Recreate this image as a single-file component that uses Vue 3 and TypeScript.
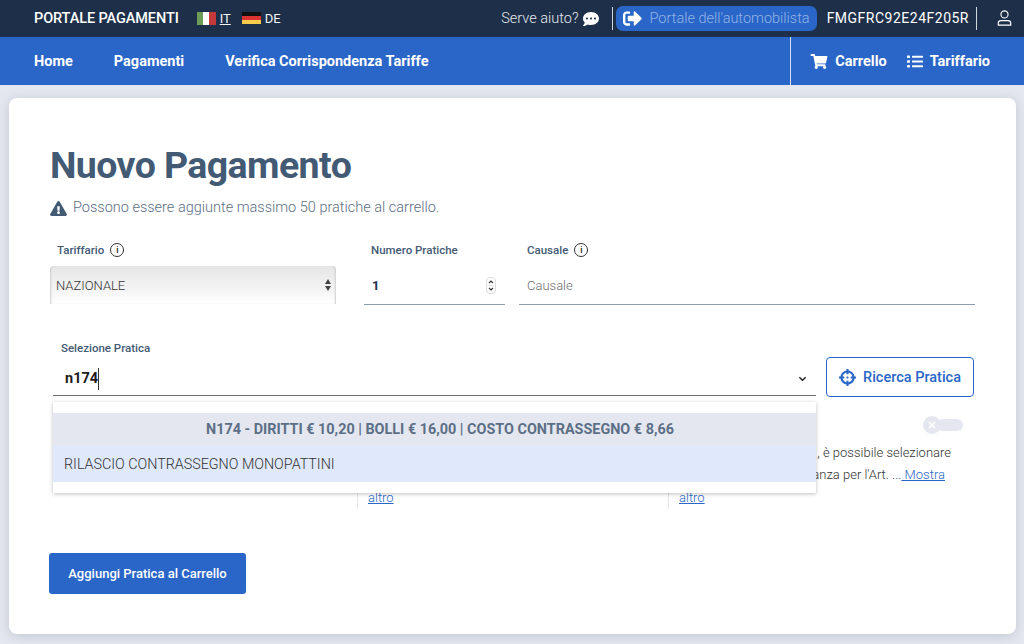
<template>
  <div class="page">
    <header class="topbar">
      <div class="topbar-left">
        <span class="brand">PORTALE PAGAMENTI</span>
        <span class="flag flag--it"><i /><i /><i /></span>
        <a class="lang lang--active">IT</a>
        <span class="flag flag--de"><i /><i /><i /></span>
        <a class="lang">DE</a>
      </div>
      <div class="topbar-right">
        <span class="help">Serve aiuto?</span>
        <svg class="icon-chat" viewBox="0 0 512 512" fill="currentColor">
          <path d="M256 32C114.600 32 0 125.100 0 240c0 49.600 21.400 95 57 130.700C44.500 421.100 2.700 466 2.200 466.500c-2.200 2.300-2.800 5.700-1.500 8.700S4.800 480 8 480c66.300 0 116-31.800 140.600-51.400 32.700 12.300 69 19.400 107.400 19.400 141.400 0 256-93.100 256-208S397.400 32 256 32zM128 272c-17.700 0-32-14.300-32-32s14.300-32 32-32 32 14.300 32 32-14.300 32-32 32zm128 0c-17.700 0-32-14.300-32-32s14.300-32 32-32 32 14.300 32 32-14.300 32-32 32zm128 0c-17.700 0-32-14.300-32-32s14.300-32 32-32 32 14.300 32 32-14.300 32-32 32z" />
        </svg>
        <span class="divider" />
        <a class="portal">
          <svg class="icon-portal" viewBox="0 0 512 512" fill="currentColor">
            <path d="M497 273L329 441c-15 15-41 4.500-41-17v-96H152c-13.300 0-24-10.700-24-24v-96c0-13.300 10.700-24 24-24h136V88c0-21.400 25.900-32 41-17l168 168c9.300 9.400 9.300 24.600 0 34zM192 436v-40c0-6.600-5.400-12-12-12H96c-17.700 0-32-14.300-32-32V160c0-17.700 14.300-32 32-32h84c6.600 0 12-5.400 12-12V76c0-6.600-5.400-12-12-12H96c-53 0-96 43-96 96v192c0 53 43 96 96 96h84c6.600 0 12-5.400 12-12z" />
          </svg>
          <span>Portale dell'automobilista</span>
        </a>
        <span class="fiscal">FMGFRC92E24F205R</span>
        <span class="divider divider--user" />
        <svg class="icon-user" viewBox="2 1 16 18" fill="none" stroke="currentColor" stroke-width="1.300">
          <circle cx="10" cy="6" r="4" />
          <path d="M3 18v-2a3 3 0 0 1 3-3h8a3 3 0 0 1 3 3v2z" />
        </svg>
      </div>
    </header>

    <nav class="navbar">
      <div class="nav-left">
        <a v-for="item in navItems" :key="item" class="nav-link">{{ item }}</a>
      </div>
      <div class="nav-right">
        <a class="nav-link nav-link--tool">
          <svg class="nav-icon nav-icon--cart" viewBox="0 0 576 512" fill="currentColor">
            <path d="M528.100 301.300l47.300-208C578.800 78.300 567.400 64 552 64H159.200l-9.200-44.800C147.800 8 137.900 0 126.500 0H24C10.700 0 0 10.700 0 24v16c0 13.300 10.700 24 24 24h69.900l70.200 343.400C147.300 417.100 136 435.200 136 456c0 30.900 25.100 56 56 56s56-25.100 56-56c0-15.700-6.400-29.800-16.800-40h209.600C430.400 426.200 424 440.300 424 456c0 30.900 25.100 56 56 56s56-25.100 56-56c0-22.200-12.900-41.300-31.600-50.400l5.500-24.300c3.400-15-8-29.300-23.400-29.300H218.100l-6.500-32h293.100c11.200 0 20.900-7.800 23.400-18.700z" />
          </svg>
          Carrello
        </a>
        <a class="nav-link nav-link--tool">
          <svg class="nav-icon nav-icon--list" viewBox="0 0 16 14" fill="currentColor">
            <rect x="0" y="1" width="3" height="2.400" rx=".6" />
            <rect x="5" y="1.200" width="11" height="2" rx=".5" />
            <rect x="0" y="5.800" width="3" height="2.400" rx=".6" />
            <rect x="5" y="6" width="11" height="2" rx=".5" />
            <rect x="0" y="10.600" width="3" height="2.400" rx=".6" />
            <rect x="5" y="10.800" width="11" height="2" rx=".5" />
          </svg>
          Tariffario
        </a>
      </div>
    </nav>

    <main class="card">
      <h1 class="title">Nuovo Pagamento</h1>
      <p class="notice">
        <svg class="icon-warning" viewBox="0 0 576 512" fill="currentColor">
          <path d="M569.500 440C588 472 564.800 512 527.900 512H48.100c-37 0-60-40.100-41.600-72L246.400 24c18.500-32 64.700-32 83.200 0l239.900 416zM288 354c-25.400 0-46 20.600-46 46s20.600 46 46 46 46-20.600 46-46-20.600-46-46-46zm-43.700-165.400l7.400 136c.3 6.400 5.600 11.400 12 11.400h48.500c6.400 0 11.600-5 12-11.400l7.400-136c.4-6.900-5.100-12.600-12-12.600h-63.900c-6.900 0-12.400 5.800-12 12.600z" />
        </svg>
        Possono essere aggiunte massimo 50 pratiche al carrello.
      </p>

      <div class="form-row">
        <div class="field field--tariff">
          <label class="label">Tariffario <span class="info">i</span></label>
          <div class="select">
            <span>NAZIONALE</span>
            <span class="select-arrows"><i class="up" /><i class="down" /></span>
          </div>
        </div>
        <div class="field field--count">
          <label class="label">Numero Pratiche</label>
          <div class="input input--count">
            <strong>1</strong>
            <span class="stepper">
              <svg viewBox="0 0 10 17" fill="none" stroke="#333" stroke-width="1.100">
                <rect x=".5" y=".5" width="9" height="16" rx="4" stroke="#dcdcdc" />
                <path d="M8.500 8.500H1.500" stroke="#e6e6e6" />
                <path d="M3 6l2-2 2 2M3 11l2 2 2-2" />
              </svg>
            </span>
          </div>
        </div>
        <div class="field field--reason">
          <label class="label">Causale <span class="info">i</span></label>
          <div class="input input--placeholder">Causale</div>
        </div>
      </div>

      <div class="search-row">
        <div class="search-field">
          <label class="label label--search">Selezione Pratica</label>
          <div class="combo">
            <span class="combo-value">n174</span>
            <span class="caret" />
            <svg class="combo-chevron" viewBox="0 0 10 6" fill="none" stroke="#222" stroke-width="1.600">
              <path d="M1.500 1l3.500 3.500L8.500 1" />
            </svg>
          </div>
          <div class="dropdown">
            <div class="dropdown-group">N174 - DIRITTI € 10,20 | BOLLI € 16,00 | COSTO CONTRASSEGNO € 8,66</div>
            <div class="dropdown-option">RILASCIO CONTRASSEGNO MONOPATTINI</div>
          </div>
        </div>
        <button class="btn-outline" type="button">
          <svg class="icon-target" viewBox="0 0 512 512" fill="currentColor">
            <path d="M500 224h-30.400C455.800 130.800 381.200 56.200 288 42.400V12c0-6.600-5.400-12-12-12h-40c-6.600 0-12 5.400-12 12v30.400C130.800 56.200 56.200 130.800 42.400 224H12c-6.600 0-12 5.400-12 12v40c0 6.600 5.400 12 12 12h30.400c13.800 93.200 88.400 167.800 181.600 181.600V500c0 6.600 5.400 12 12 12h40c6.600 0 12-5.400 12-12v-30.400c93.200-13.800 167.800-88.400 181.600-181.600H500c6.600 0 12-5.400 12-12v-40c0-6.600-5.400-12-12-12zM288 404.600V364c0-6.600-5.400-12-12-12h-40c-6.600 0-12 5.400-12 12v40.600C166.400 391.500 120.700 345.900 107.400 288H148c6.600 0 12-5.400 12-12v-40c0-6.600-5.400-12-12-12h-40.600C120.500 166.400 166.100 120.700 224 107.400V148c0 6.600 5.400 12 12 12h40c6.600 0 12-5.400 12-12v-40.600C345.600 120.500 391.300 166.100 404.600 224H364c-6.600 0-12 5.400-12 12v40c0 6.600 5.400 12 12 12h40.600C391.500 345.600 345.900 391.300 288 404.600zM288 256c0 17.700-14.300 32-32 32s-32-14.300-32-32 14.300-32 32-32 32 14.300 32 32z" />
          </svg>
          Ricerca Pratica
        </button>
      </div>

      <div class="options">
        <div class="option-col" />
        <div class="option-col option-col--line">
          <p class="option-text">
            <a class="more">altro</a>
          </p>
        </div>
        <div class="option-col option-col--line">
          <div class="toggle">
            <span class="toggle-track" />
            <span class="toggle-knob">
              <svg viewBox="0 0 10 10" fill="none" stroke="#fff" stroke-width="1.600">
                <path d="M2 2l6 6M8 2l-6 6" />
              </svg>
            </span>
          </div>
          <p class="option-line">, è possibile selezionare</p>
          <p class="option-line option-line--link">anza per l'Art. ...<a class="more"> Mostra</a></p>
          <p class="option-text"><a class="more">altro</a></p>
        </div>
      </div>

      <button class="btn-primary" type="button">Aggiungi Pratica al Carrello</button>
    </main>
  </div>
</template>

<script setup lang="ts">
const navItems: string[] = ["Home", "Pagamenti", "Verifica Corrispondenza Tariffe"];
</script>

<style>
html,
body {
  margin: 0;
  background: #e4e7ef;
}
</style>

<style scoped>
.page {
  width: 1024px;
  height: 644px;
  overflow: hidden;
  background: #e4e7ef;
  font-family: "Roboto", "Liberation Sans", sans-serif;
  color: #1a2f4a;
}

.topbar {
  height: 37px;
  box-sizing: border-box;
  padding: 0 12px 1px 34px;
  display: flex;
  align-items: center;
  justify-content: space-between;
  background: #1e3049;
  color: #fff;
}

.topbar-left,
.topbar-right {
  display: flex;
  align-items: center;
}

.brand {
  font-size: 14.500px;
  font-weight: 500;
  letter-spacing: -0.1px;
  margin-right: 18px;
}

.flag {
  width: 19px;
  height: 13px;
  display: flex;
  margin-right: 4px;
}

.flag--it i {
  flex: 1;
}
.flag--it i:nth-child(1) {
  background: #6d9b58;
}
.flag--it i:nth-child(2) {
  background: #fff;
}
.flag--it i:nth-child(3) {
  background: #c5393a;
}

.flag--de {
  flex-direction: column;
}
.flag--de i {
  flex: 1;
}
.flag--de i:nth-child(1) {
  background: #111;
}
.flag--de i:nth-child(2) {
  background: #d33;
}
.flag--de i:nth-child(3) {
  background: #f7cc4c;
}

.lang {
  font-size: 13px;
  margin-right: 11px;
  color: #f2f4f7;
}

.lang--active {
  text-decoration: underline;
}

.help {
  font-size: 14.500px;
  font-weight: 300;
  color: #e6e9ee;
}

.icon-chat {
  width: 16px;
  height: 16px;
  margin: 2px 13px 0 4px;
  color: #fff;
}

.divider {
  width: 1px;
  height: 23px;
  background: #cfd5dd;
}

.divider--user {
  margin: 0 20px 0 7px;
}

.portal {
  height: 25px;
  box-sizing: border-box;
  margin-left: 3px;
  padding: 0 7px;
  display: flex;
  align-items: center;
  gap: 8px;
  border-radius: 7px;
  background: #2a66c8;
  color: #92b3e6;
  font-size: 14.500px;
  font-weight: 300;
}

.icon-portal {
  width: 19px;
  height: 19px;
  color: #fff;
}

.fiscal {
  margin-left: 10px;
  font-size: 14px;
  letter-spacing: 0.5px;
}

.icon-user {
  width: 15px;
  height: 16px;
}

.navbar {
  height: 48px;
  box-sizing: border-box;
  padding: 0 34px;
  display: flex;
  align-items: stretch;
  justify-content: space-between;
  background: #2a66c8;
}

.nav-left {
  display: flex;
  align-items: center;
  gap: 41px;
}

.nav-right {
  display: flex;
  align-items: center;
  gap: 20px;
  padding-left: 19px;
  border-left: 1px solid #d5e0f3;
}

.nav-link {
  color: #fff;
  font-size: 14.500px;
  font-weight: 700;
}

.nav-link--tool {
  display: flex;
  align-items: center;
  gap: 7px;
}

.nav-icon {
  height: 15px;
}

.nav-icon--cart {
  width: 18px;
}

.nav-icon--list {
  width: 16px;
}

.card {
  margin: 13px 8px 0 9px;
  height: 536px;
  box-sizing: border-box;
  padding: 47px 41px 0;
  border-radius: 8px;
  background: #fff;
  box-shadow: 0 2px 12px rgba(40, 55, 85, 0.18);
}

.title {
  margin: 0;
  font-size: 37.500px;
  line-height: 40px;
  font-weight: 700;
  letter-spacing: -0.6px;
  color: #435a75;
}

.notice {
  margin: 13px 0 0;
  display: flex;
  align-items: center;
  gap: 6px;
  font-size: 14.500px;
  font-weight: 300;
  line-height: 20px;
  color: #5c6f86;
}

.icon-warning {
  width: 17px;
  height: 15px;
  color: #435a75;
}

.form-row {
  margin-top: 22px;
  display: flex;
}

.field--tariff {
  width: 286px;
  margin-right: 28px;
}

.field--count {
  width: 141px;
  margin-right: 14px;
}

.field--reason {
  width: 456px;
}

.label {
  height: 20px;
  display: flex;
  align-items: center;
  gap: 6px;
  font-size: 11.500px;
  font-weight: 500;
  color: #435a75;
}

.field--tariff .label {
  padding-left: 7px;
}

.field--count .label {
  padding-left: 7px;
}

.field--reason .label {
  padding-left: 8px;
}

.info {
  width: 14px;
  height: 14px;
  box-sizing: border-box;
  display: flex;
  align-items: center;
  justify-content: center;
  border: 1px solid #333;
  border-radius: 50%;
  font-size: 9px;
  color: #222;
}

.select {
  margin-top: 6px;
  height: 38px;
  box-sizing: border-box;
  padding: 0 5px 0 6px;
  display: flex;
  align-items: center;
  justify-content: space-between;
  border-radius: 4px 4px 0 0;
  background: linear-gradient(#e6e6e6, #f2f2f2 55%, #ffffff);
  box-shadow: inset 2px 0 2px -1px #cfcfcf, inset -2px 0 2px -1px #cfcfcf;
  font-size: 13px;
  font-weight: 300;
  color: #333;
}

.select-arrows {
  display: flex;
  flex-direction: column;
  gap: 2px;
}

.select-arrows i {
  display: block;
  border-left: 3px solid transparent;
  border-right: 3px solid transparent;
}

.select-arrows .up {
  border-bottom: 5px solid #444;
}

.select-arrows .down {
  border-top: 5px solid #444;
}

.input {
  margin-top: 7px;
  height: 38px;
  box-sizing: border-box;
  display: flex;
  align-items: center;
  border-bottom: 1px solid #8b9cb0;
  font-size: 13px;
}

.input--count {
  padding: 0 9px 0 8px;
  justify-content: space-between;
  color: #1a2f4a;
}

.stepper svg {
  display: block;
  width: 10px;
  height: 17px;
}

.input--placeholder {
  padding-left: 8px;
  color: #707070;
  font-weight: 300;
}

.search-row {
  margin: 33px 0 0 3px;
  display: flex;
  align-items: flex-end;
}

.search-field {
  position: relative;
  width: 763px;
  margin-right: 10px;
  margin-bottom: 1px;
}

.label--search {
  padding-left: 8px;
}

.combo {
  margin-top: 8px;
  height: 30px;
  box-sizing: border-box;
  padding: 0 9px 4px 12px;
  display: flex;
  align-items: center;
  border-bottom: 1px solid #6f6f6f;
  font-size: 14.500px;
  font-weight: 700;
  color: #1c1c1c;
}

.caret {
  width: 1px;
  height: 22px;
  background: #333;
}

.combo-chevron {
  width: 9px;
  height: 6px;
  margin-left: auto;
}

.dropdown {
  position: absolute;
  z-index: 2;
  top: 64px;
  left: 0;
  right: 0;
  height: 91px;
  box-sizing: border-box;
  padding: 11px 0;
  background: #fff;
  box-shadow: 0 1px 4px rgba(0, 0, 0, 0.25);
}

.dropdown-group {
  height: 33px;
  padding-left: 11px;
  display: flex;
  align-items: center;
  justify-content: center;
  background: #e4e7ef;
  font-size: 14.400px;
  font-weight: 700;
  color: #5c6f86;
}

.dropdown-option {
  height: 36px;
  padding-left: 11px;
  display: flex;
  align-items: center;
  background: #dfe9fb;
  font-size: 14.300px;
  font-weight: 300;
  color: #333;
}

.btn-outline {
  width: 148px;
  height: 40px;
  display: flex;
  align-items: center;
  justify-content: center;
  gap: 7px;
  padding: 0;
  border: 1px solid #2a66c8;
  border-radius: 4px;
  background: #fff;
  font-family: inherit;
  font-size: 14.500px;
  font-weight: 500;
  color: #2a66c8;
}

.icon-target {
  width: 17px;
  height: 17px;
}

.options {
  margin: 10px 0 0;
  display: flex;
  height: 102px;
}

.option-col {
  width: 307px;
}

.option-col--line {
  width: 311px;
  box-sizing: border-box;
  padding-left: 10px;
  border-left: 1px solid #e4e7ef;
  display: flex;
  flex-direction: column;
  justify-content: flex-end;
}

.option-col--line:last-child {
  width: 295px;
  padding-right: 12px;
}

.toggle {
  position: relative;
  align-self: flex-end;
  width: 40px;
  height: 18px;
  margin: 0 -12px 8px 0;
}

.toggle-track {
  position: absolute;
  top: 3px;
  left: 14px;
  right: 0;
  height: 12px;
  border-radius: 6px;
  background: #e4e7ef;
}

.toggle-knob {
  position: absolute;
  top: 0;
  left: 0;
  width: 18px;
  height: 18px;
  display: flex;
  align-items: center;
  justify-content: center;
  border-radius: 50%;
  background: #e4e7ef;
}

.toggle-knob svg {
  width: 10px;
  height: 10px;
}

.option-line,
.option-text {
  margin: 0;
  height: 22.500px;
  font-size: 13px;
  font-weight: 300;
  line-height: 22px;
  color: #333;
}

.option-line {
  text-align: right;
}

.option-line--link {
  padding-right: 6px;
}

.more {
  color: #2a66c8;
  text-decoration: underline;
}

.btn-primary {
  display: block;
  width: 197px;
  height: 41px;
  margin: 44px 0 0 -1px;
  padding: 0;
  border: 0;
  border-radius: 3px;
  background: #2a66c8;
  font-family: inherit;
  font-size: 13px;
  font-weight: 500;
  color: #fff;
}
</style>
